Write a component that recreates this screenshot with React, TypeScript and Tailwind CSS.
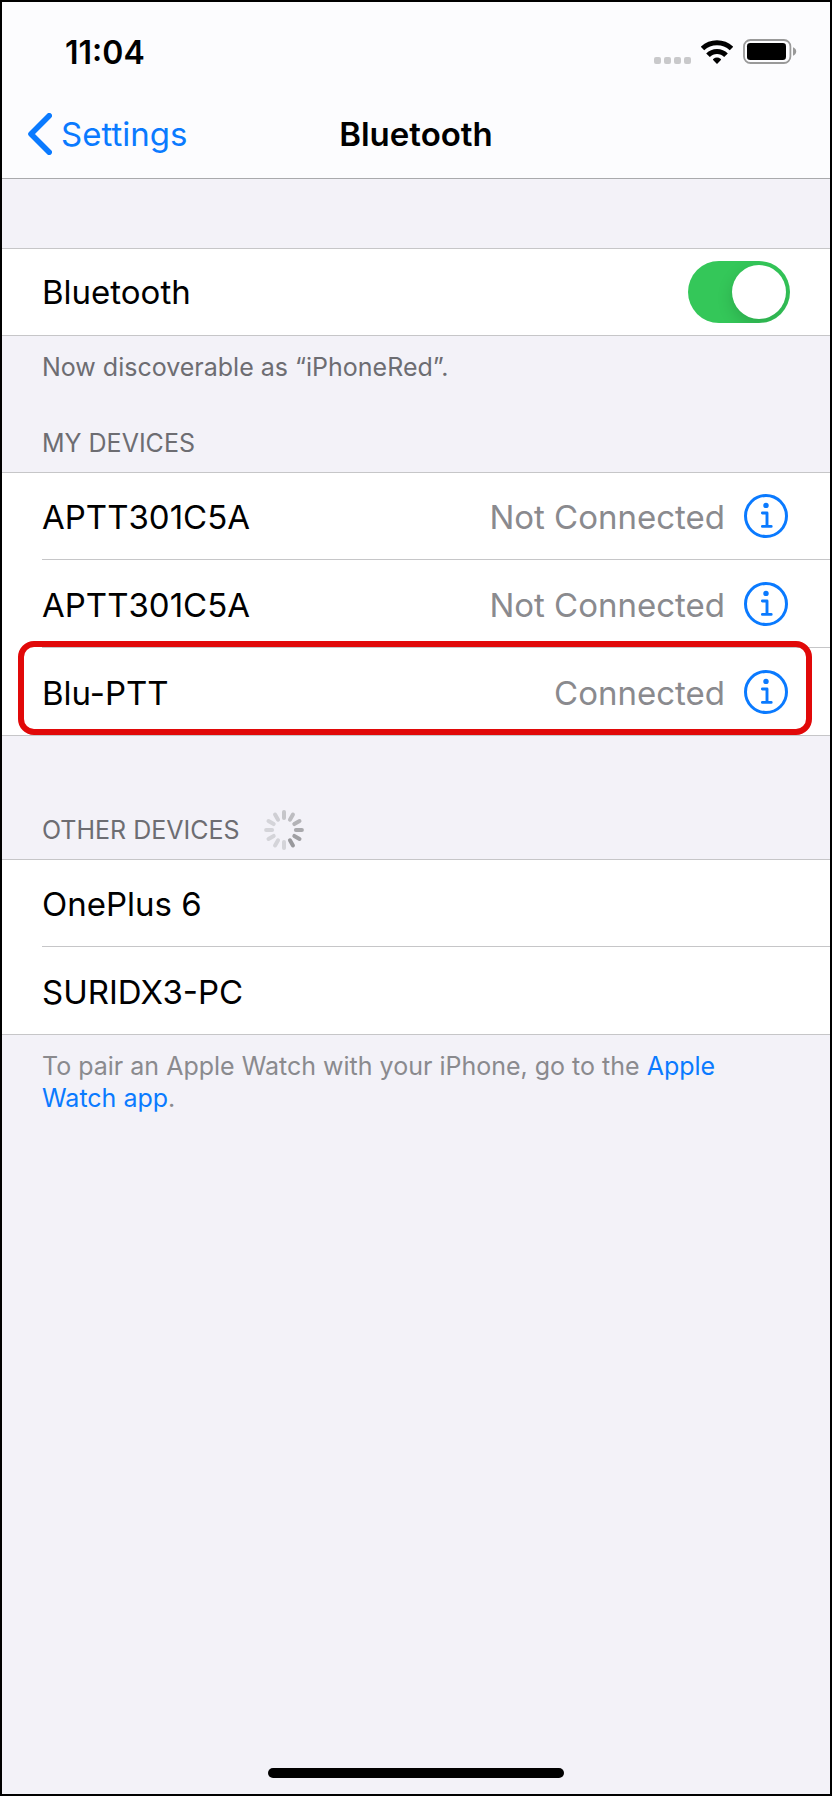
import { useState } from "react";

type Device = { id: string; name: string; status?: string; highlighted?: boolean };

const myDevices: Device[] = [
  { id: "a", name: "APTT301C5A", status: "Not Connected" },
  { id: "b", name: "APTT301C5A", status: "Not Connected" },
  { id: "c", name: "Blu-PTT", status: "Connected", highlighted: true },
];

const otherDevices: Device[] = [
  { id: "d", name: "OnePlus 6" },
  { id: "e", name: "SURIDX3-PC" },
];

const spokes = [
  "#c6c6ca", "#bdbdc1", "#b3b3b7", "#a9a9ad", "#a0a0a4", "#98989c",
  "#d4d4d9", "#d4d4d9", "#d4d4d9", "#d4d4d9", "#d4d4d9", "#cfcfd4",
];

function Wifi() {
  return (
    <svg viewBox="0 0 32 24" className="h-6 w-8" fill="none" stroke="#000" strokeWidth="5" aria-hidden="true">
      <path d="M1.5 8.5A21.2 21.2 0 0 1 30.5 8.5" />
      <path d="M7 15.3A12.4 12.4 0 0 1 25 15.3" />
      <path d="M16 24 12.1 19.9Q11.7 19.4 12.2 18.9A6.3 6.3 0 0 1 19.8 18.9Q20.3 19.4 19.9 19.9Z" fill="#000" stroke="none" />
    </svg>
  );
}

function Battery() {
  return (
    <svg viewBox="0 0 54 25" className="h-[25px] w-[54px]" aria-hidden="true">
      <rect x="1" y="1" width="46.4" height="23" rx="6.5" fill="none" stroke="#999" strokeWidth="1.8" />
      <rect x="4" y="4" width="39" height="17" rx="3.2" fill="#000" />
      <path d="M50 8.3Q53.2 9.6 53.2 12.5T50 16.7Z" fill="#999" />
    </svg>
  );
}

function InfoIcon() {
  return (
    <svg viewBox="0 0 48 48" className="size-12" fill="none" stroke="#0a7aff" strokeWidth="3" strokeLinecap="round" strokeLinejoin="round" aria-hidden="true">
      <circle cx="24" cy="24" r="20.5" />
      <circle cx="24" cy="13.4" r="2.7" fill="#0a7aff" stroke="none" />
      <path d="M20.4 21H25V34.4M20.4 34.4H29.2" strokeWidth="2.9" />
    </svg>
  );
}

function Spinner() {
  return (
    <svg viewBox="0 0 40 40" className="size-10" strokeWidth="4" strokeLinecap="round" role="img" aria-label="Searching">
      {spokes.map((color, i) => (
        <line key={i} x1="20" y1="2.1" x2="20" y2="8.1" stroke={color} transform={`rotate(${i * 30} 20 20)`} />
      ))}
    </svg>
  );
}

function DeviceRow({ device, first, last }: { device: Device; first: boolean; last: boolean }) {
  return (
    <li className={`relative ${first ? "border-t border-[#c6c6c8]" : ""} ${last ? "border-b border-[#c6c6c8]" : "pl-10"}`}>
      <div
        className={`flex items-center justify-between pr-10 ${first || last ? "h-[87px]" : "h-[88px]"} ${
          last ? "pl-10" : "border-b border-[#c6c6c8]"
        }`}
      >
        <span className="pt-0.5">{device.name}</span>
        {device.status && (
          <span className="flex items-center gap-[17px]">
            <span className="pt-0.5 text-[#8a8a8e]">{device.status}</span>
            <button type="button" aria-label={`More info about ${device.name}`}>
              <InfoIcon />
            </button>
          </span>
        )}
      </div>
      {device.highlighted && (
        <div className="pointer-events-none absolute -top-[7px] right-[18px] bottom-0 left-4 rounded-2xl border-6 border-[#e10909]" />
      )}
    </li>
  );
}

function DeviceList({ devices }: { devices: Device[] }) {
  return (
    <ul className="bg-white">
      {devices.map((d, i) => (
        <DeviceRow key={d.id} device={d} first={i === 0} last={i === devices.length - 1} />
      ))}
    </ul>
  );
}

export default function App() {
  const [on, setOn] = useState(true);
  return (
    <div className="flex min-h-screen flex-col border-2 border-black bg-[#f3f2f8] font-['Inter','Liberation_Sans',sans-serif] text-[33px] leading-10 text-black">
      <header className="border-b border-[#a9a9ac] bg-[#fcfcfe]">
        <div className="flex h-[88px] items-center justify-between pt-[14px] pr-[33px] pl-[63px]">
          <time className="text-[32px] font-semibold">11:04</time>
          <div className="flex items-end gap-[10px] pb-1">
            <div className="flex gap-[3px]">
              <span className="size-[7px] rounded-xs bg-[#c9c9cb]" />
              <span className="size-[7px] rounded-xs bg-[#c9c9cb]" />
              <span className="size-[7px] rounded-xs bg-[#c9c9cb]" />
              <span className="size-[7px] rounded-xs bg-[#c9c9cb]" />
            </div>
            <Wifi />
            <Battery />
          </div>
        </div>
        <nav className="grid h-[88px] grid-cols-[1fr_auto_1fr] items-center px-[26px]">
          <a href="#settings" className="flex items-center gap-[9px] text-[#0a7aff]">
            <svg viewBox="0 0 24 42" className="h-[42px] w-6" fill="none" stroke="currentColor" strokeWidth="5.6" strokeLinecap="round" strokeLinejoin="round" aria-hidden="true">
              <path d="M21.2 2.8 3 21 21.2 39.2" />
            </svg>
            Settings
          </a>
          <h1 className="font-semibold">Bluetooth</h1>
        </nav>
      </header>

      <main className="flex-1 pt-[69px]">
        <label className="flex h-[88px] items-center justify-between border-y border-[#c6c6c8] bg-white px-10">
          Bluetooth
          <input
            type="checkbox"
            role="switch"
            checked={on}
            onChange={(e) => setOn(e.target.checked)}
            className="flex h-[62px] w-[102px] cursor-pointer appearance-none items-center overflow-hidden rounded-full bg-[#e9e9ea] p-1 before:size-[54px] before:rounded-full before:bg-white before:shadow-[0_6px_16px_rgba(0,0,0,0.15)] checked:justify-end checked:bg-[#34c759]"
          />
        </label>
        <p className="px-10 pt-[15px] text-[25px] leading-8 text-[#6d6d72]">Now discoverable as “iPhoneRed”.</p>

        <section>
          <h2 className="px-10 pt-11 pb-[13px] text-[25px] leading-8 text-[#6d6d72]">MY DEVICES</h2>
          <DeviceList devices={myDevices} />
        </section>

        <section>
          <div className="flex items-center gap-6 px-10 pt-[74px] pb-[9px]">
            <h2 className="text-[25px] leading-8 text-[#6d6d72]">OTHER DEVICES</h2>
            <Spinner />
          </div>
          <DeviceList devices={otherDevices} />
          <p className="px-10 pt-[15px] text-[25px] leading-8 text-[#8a8a8e]">
            To pair an Apple Watch with your iPhone, go to the{" "}
            <a href="#watch" className="text-[#0a7aff]">
              Apple Watch app
            </a>
            .
          </p>
        </section>
      </main>

      <footer className="flex justify-center pb-4">
        <div className="h-[10px] w-[296px] rounded-full bg-black" />
      </footer>
    </div>
  );
}
